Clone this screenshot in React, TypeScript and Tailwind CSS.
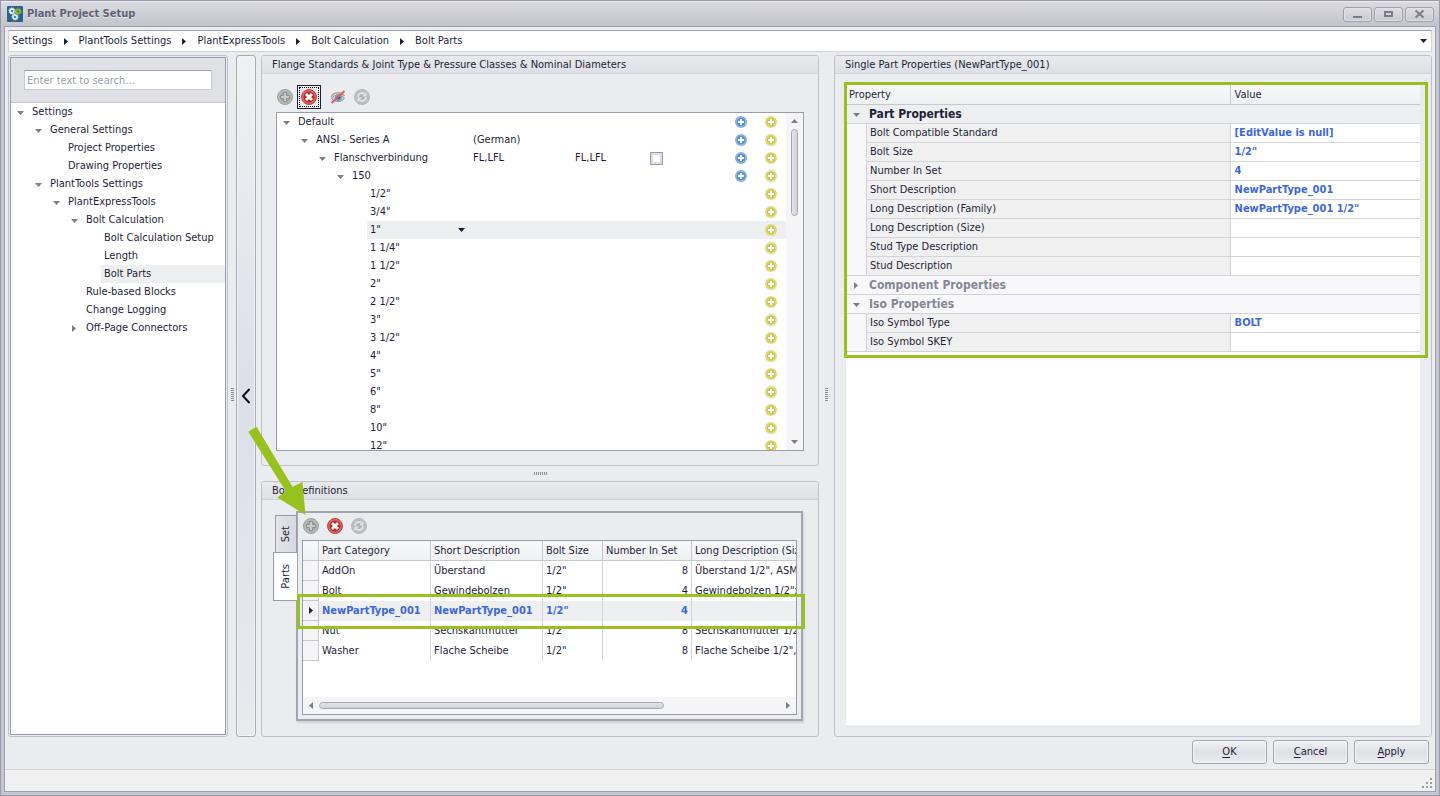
import type { ReactNode } from "react";
import { clsx } from "clsx";

type TreeItem = { label: string; level: number; state?: "open" | "closed"; selected?: boolean };

const navItems: TreeItem[] = [
  { label: "Settings", level: 0, state: "open" },
  { label: "General Settings", level: 1, state: "open" },
  { label: "Project Properties", level: 2 },
  { label: "Drawing Properties", level: 2 },
  { label: "PlantTools Settings", level: 1, state: "open" },
  { label: "PlantExpressTools", level: 2, state: "open" },
  { label: "Bolt Calculation", level: 3, state: "open" },
  { label: "Bolt Calculation Setup", level: 4 },
  { label: "Length", level: 4 },
  { label: "Bolt Parts", level: 4, selected: true },
  { label: "Rule-based Blocks", level: 3 },
  { label: "Change Logging", level: 3 },
  { label: "Off-Page Connectors", level: 3, state: "closed" },
];

type FlangeItem = TreeItem & { first?: string; second?: string; check?: boolean; blue?: boolean };

const flangeItems: FlangeItem[] = [
  { label: "Default", level: 0, state: "open", blue: true },
  { label: "ANSI - Series A", level: 1, state: "open", first: "(German)", blue: true },
  { label: "Flanschverbindung", level: 2, state: "open", first: "FL,LFL", second: "FL,LFL", check: true, blue: true },
  { label: "150", level: 3, state: "open", blue: true },
  ...['1/2"', '3/4"', '1"', '1 1/4"', '1 1/2"', '2"', '2 1/2"', '3"', '3 1/2"', '4"', '5"', '6"', '8"', '10"', '12"'].map(
    (label) => ({ label, level: 4, selected: label === '1"' })
  ),
];

const parts = [
  ["AddOn", "Überstand", '1/2"', "8", 'Überstand 1/2", ASME'],
  ["Bolt", "Gewindebolzen", '1/2"', "4", 'Gewindebolzen 1/2"x65'],
  ["NewPartType_001", "NewPartType_001", '1/2"', "4", ""],
  ["Nut", "Sechskantmutter", '1/2"', "8", 'Sechskantmutter 1/2"'],
  ["Washer", "Flache Scheibe", '1/2"', "8", 'Flache Scheibe 1/2",'],
];

const partProps = [
  ["Bolt Compatible Standard", "[EditValue is null]"],
  ["Bolt Size", '1/2"'],
  ["Number In Set", "4"],
  ["Short Description", "NewPartType_001"],
  ["Long Description (Family)", 'NewPartType_001 1/2"'],
  ["Long Description (Size)", ""],
  ["Stud Type Description", ""],
  ["Stud Description", ""],
];

const isoProps = [
  ["Iso Symbol Type", "BOLT"],
  ["Iso Symbol SKEY", ""],
];

export default function App() {
  return (
    <div className="flex h-screen min-h-[640px] flex-col border border-[#9a99a9] bg-[#c6c6d0] font-['DejaVu_Sans_Condensed','DejaVu_Sans',sans-serif] text-[11px] leading-[18px] text-[#1e1e38] select-none">
      <TitleBar />
      <div className="mx-[3px] mb-[3px] flex min-h-0 flex-1 flex-col border border-[#9fa0ac] bg-[#ebecf0]">
        <Breadcrumb />
        <main className="mx-[3px] flex min-h-0 flex-1">
          <NavPanel />
          <div className="flex w-2 items-center justify-center pb-1">
            <VerticalGrip />
          </div>
          <button
            aria-label="Collapse"
            className="flex w-5 items-center justify-center rounded-[3px] border border-[#a9aab6] bg-linear-to-b from-[#f0f1f3] via-[#dcdfe8] to-[#e9eaee] shadow-[inset_0_0_0_1px_#f3f3f6]"
          >
            <svg width="10" height="16" viewBox="0 0 10 16" fill="none" stroke="#111" strokeWidth="2">
              <path d="M8.500 1L2 8l6.500 7" />
            </svg>
          </button>
          <div className="ml-[5px] flex min-w-0 flex-[559] flex-col">
            <FlangePanel />
            <div className="flex h-[15px] items-center justify-center">
              <HorizontalGrip />
            </div>
            <BoltPanel />
          </div>
          <div className="flex w-[15px] items-center justify-center pb-1">
            <VerticalGrip />
          </div>
          <PropertiesPanel />
        </main>

        {/* dialog buttons */}
        <div className="mt-[3px] mr-[6px] mb-[5px] flex justify-end gap-[6px]">
          <DialogButton accessKey="O" rest="K" />
          <DialogButton accessKey="C" rest="ancel" />
          <DialogButton accessKey="A" rest="pply" />
        </div>

        {/* status bar */}
        <footer className="flex h-[22px] items-end justify-end border-t border-[#d3d4da] bg-[#f0f0f0] pr-[2px] pb-[2px]">
          <svg width="12" height="12" fill="#9b9ba3">
            <path d="M9 1h2v2H9zM5 5h2v2H5zM9 5h2v2H9zM1 9h2v2H1zM5 9h2v2H5zM9 9h2v2H9z" />
          </svg>
        </footer>
      </div>
    </div>
  );
}

function TitleBar() {
  return (
    <header className="flex h-[25px] shrink-0 items-center border-t border-[#ececf0] bg-linear-to-b from-[#dadae0] to-[#c3c3cb] pr-[5px] pl-[6px]">
      <svg width="16" height="16" viewBox="0 0 16 16">
        <rect width="16" height="16" rx="1" fill="#2c6388" />
        <g fill="none" strokeWidth="2">
          <circle cx="5" cy="5" r="2" stroke="#e4eef2" />
          <circle cx="11" cy="5.500" r="2" stroke="#86b82c" />
          <circle cx="8" cy="11" r="2" stroke="#d5e4ec" />
        </g>
        <g fill="none" strokeWidth="1" strokeDasharray="1 1">
          <circle cx="5" cy="5" r="3.300" stroke="#c6dae4" />
          <circle cx="11" cy="5.500" r="3.300" stroke="#6f9f2c" />
          <circle cx="8" cy="11" r="3.300" stroke="#b9d0dd" />
        </g>
      </svg>
      <h1 className="ml-1 flex-1 font-bold text-[#5f5f74] [text-shadow:0_1px_0_#e8e8ee]">Plant Project Setup</h1>
      <div className="flex gap-[2px]">
        <WindowButton label="Minimize">
          <path d="M2 8h9v2H2z" fill="#7c7c8c" />
        </WindowButton>
        <WindowButton label="Maximize">
          <path d="M3 4h7v4H3z" fill="none" stroke="#7c7c8c" strokeWidth="2" />
        </WindowButton>
        <WindowButton label="Close">
          <path d="M2.500 2.500l8 7M10.500 2.500l-8 7" fill="none" stroke="#7c7c8c" strokeWidth="2" />
        </WindowButton>
      </div>
    </header>
  );
}

function WindowButton({ label, children }: { label: string; children: ReactNode }) {
  return (
    <button
      aria-label={label}
      className="flex h-[15px] w-[29px] items-center justify-center rounded-[3px] border border-[#a0a0ac] bg-linear-to-b from-[#dedee3] to-[#c9c9d0] shadow-[inset_0_0_0_1px_#e0e0e6]"
    >
      <svg width="13" height="12" viewBox="0 0 13 12">
        {children}
      </svg>
    </button>
  );
}

function Breadcrumb() {
  const crumbs = ["Settings", "PlantTools Settings", "PlantExpressTools", "Bolt Calculation", "Bolt Parts"];
  return (
    <nav className="m-[3px] flex h-[22px] shrink-0 items-center border border-[#d3d4da] border-t-[#a2a3af] bg-white pl-[3px]">
      {crumbs.map((crumb, i) => (
        <span key={crumb} className="flex items-center">
          {i > 0 && (
            <span className="flex w-[26px] justify-center">
              <Arrow dir="right" dark />
            </span>
          )}
          <a href="#">{crumb}</a>
        </span>
      ))}
      <button aria-label="Show path list" className="ml-auto flex w-[15px] justify-center">
        <Arrow dir="down" dark />
      </button>
    </nav>
  );
}

/* ---------- left navigation ---------- */

function NavPanel() {
  return (
    <aside className="flex w-[220px] shrink-0 rounded-[3px] border border-[#c0c1ca] p-px">
      <div className="flex flex-1 flex-col border border-[#9a9bab] bg-white">
        <div className="flex h-[45px] items-center border-b border-[#c3c4cc] bg-[#e0e1e6] px-[13px]">
          <input
            type="text"
            aria-label="Search settings"
            placeholder="Enter text to search…"
            className="h-5 w-full border border-[#c9cad2] border-t-[#9fa0ad] bg-white px-[2px] outline-none placeholder:text-[#9c9cac]"
          />
        </div>
        <div>
          {navItems.map((item) => (
            <div key={item.label} className="flex h-[18px]" style={{ paddingLeft: item.level * 18 }}>
              <Toggle state={item.state} />
              <span className={clsx("flex-1 pl-[3px]", item.selected && "bg-[#eeeff1]")}>{item.label}</span>
            </div>
          ))}
        </div>
      </div>
    </aside>
  );
}

function Toggle({ state }: { state?: "open" | "closed" }) {
  if (!state) return <span className="w-[18px] shrink-0" />;
  return (
    <button aria-label="Toggle node" className="flex w-[18px] shrink-0 items-center justify-center pt-px">
      <Arrow dir={state === "open" ? "down" : "right"} />
    </button>
  );
}

/* ---------- flange tree ---------- */

function FlangePanel() {
  return (
    <Panel title="Flange Standards & Joint Type & Pressure Classes & Nominal Diameters" className="min-h-0 flex-1">
      <div className="flex min-h-0 flex-1 flex-col px-[14px] pt-[11px] pb-[14px]">
        <div className="flex h-6 items-center">
          <IconButton label="Add">
            <AddIcon />
          </IconButton>
          <button aria-label="Delete" className="flex size-6 items-center justify-center border border-[#1e1e38]">
            <span className="flex size-[18px] items-center justify-center outline-1 outline-dotted outline-black">
              <DeleteIcon />
            </span>
          </button>
          <span className="w-[5px]" />
          <IconButton label="Hide unused">
            <HiddenIcon />
          </IconButton>
          <IconButton label="Refresh">
            <RefreshIcon />
          </IconButton>
        </div>

        <div className="mt-[3px] flex min-h-0 flex-1 border border-[#9a9bab] bg-white">
          <div className="min-w-0 flex-1 overflow-hidden">
            {flangeItems.map((item) => (
              <FlangeRow key={item.label} item={item} />
            ))}
          </div>
          <div className="flex w-[17px] flex-col items-center bg-[#f5f5f7] pt-[6px] pb-[6px]">
            <Arrow dir="up" />
            <div className="mt-[6px] h-[87px] w-[7px] rounded-full border border-[#a5a6b1] bg-linear-to-r from-[#e3e4e8] to-[#d2d3da]" />
            <span className="flex-1" />
            <Arrow dir="down" />
          </div>
        </div>
      </div>
    </Panel>
  );
}

function FlangeRow({ item }: { item: FlangeItem }) {
  return (
    <div className="flex h-[18px]" style={{ paddingLeft: item.level * 18 }}>
      <Toggle state={item.state} />
      <div className={clsx("flex flex-1 items-center justify-end", item.selected && "bg-[#eeeff1]")}>
        <span className="flex flex-1 items-center justify-between pr-2 pl-[3px]">
          {item.label}
          {item.selected && (
            <button aria-label="Choose diameter">
              <Arrow dir="down" dark />
            </button>
          )}
        </span>
        <span className="w-[102px]">{item.first}</span>
        <span className="w-[63px]">{item.second}</span>
        <span className="flex w-9 justify-center">
          {item.check && (
            <input
              type="checkbox"
              aria-label="Use joint type"
              className="size-[13px] appearance-none border border-[#9a9bab] bg-white shadow-[inset_0_0_0_2px_#dddee5]"
            />
          )}
        </span>
        <span className="w-[52px]" />
        <span className="flex w-[30px] justify-center">
          {item.blue && (
            <button aria-label="Add child">
              <PlusBadge color="blue" />
            </button>
          )}
        </span>
        <span className="flex w-[30px] justify-center">
          <button aria-label="Add part">
            <PlusBadge color="yellow" />
          </button>
        </span>
      </div>
    </div>
  );
}

/* ---------- bolt definitions ---------- */

function BoltPanel() {
  return (
    <Panel title="Bolt Definitions" className="relative h-64 shrink-0">
      <div className="flex min-h-0 flex-1 pt-[11px] pr-[15px] pb-[15px] pl-[11px]">
        <div className="z-10 -mr-px flex w-6 flex-col items-end pt-1">
          <button className="flex h-[37px] w-[22px] items-center justify-center border border-b-0 border-[#9a9bab] bg-linear-to-r from-[#e3e4e9] to-[#d8d9e0]">
            <span className="rotate-180 [writing-mode:vertical-rl]">Set</span>
          </button>
          <button className="flex h-[49px] w-6 items-center justify-center border border-r-0 border-[#9a9bab] bg-white">
            <span className="rotate-180 [writing-mode:vertical-rl]">Parts</span>
          </button>
        </div>
        <div className="relative flex min-w-0 flex-1 flex-col border-2 border-[#a3a4b1] px-1 pt-px pb-1 shadow-[1px_2px_2px_#d0d1d8]">
          <div className="flex h-6 items-center">
            <IconButton label="Add part">
              <AddIcon />
            </IconButton>
            <IconButton label="Delete part">
              <DeleteIcon />
            </IconButton>
            <IconButton label="Refresh parts">
              <RefreshIcon />
            </IconButton>
          </div>
          <PartsGrid />
          {/* highlight around the new row */}
          <div className="pointer-events-none absolute top-[81px] -right-1 -left-px h-[35px] border-3 border-[#97c11f]" />
        </div>
      </div>
      <svg className="pointer-events-none absolute -top-[57px] -left-[15px] z-20" width="60" height="92" viewBox="0 0 60 92">
        <path d="M1.300 6.700L9.500 1.700L45.500 61.700L55.500 57L58.500 90L30.300 72.500L39 66.500Z" fill="#97c11f" />
      </svg>
    </Panel>
  );
}

function PartsGrid() {
  return (
    <div className="mt-[2px] flex min-h-0 flex-1 flex-col border border-[#9a9bab] bg-white">
      <div className="flex-1 overflow-hidden">
        <table className="w-full table-fixed border-separate border-spacing-0 text-left whitespace-nowrap">
          <colgroup>
            <col className="w-4" />
            <col className="w-28" />
            <col className="w-28" />
            <col className="w-15" />
            <col className="w-[89px]" />
            <col />
          </colgroup>
          <thead>
            <tr className="h-5 bg-linear-to-b from-[#f8f8fa] to-[#eff0f2]">
              {["", "Part Category", "Short Description", "Bolt Size", "Number In Set", "Long Description (Size)"].map((head) => (
                <th
                  key={head}
                  className="overflow-hidden border-r border-b border-[#c6c7cf] p-0 pl-[3px] font-normal last:border-r-0"
                >
                  {head}
                </th>
              ))}
            </tr>
          </thead>
          <tbody>
            {parts.map((row, i) => {
              const active = i === 2;
              return (
                <tr key={row[0]} className={clsx("h-5", active && "bg-[#eeeff1] font-bold text-[#3d68dc]")}>
                  <td className="border-r border-b border-[#c6c7cf] bg-[#f5f5f7] p-0">
                    {active && (
                      <span className="flex justify-center">
                        <Arrow dir="right" dark />
                      </span>
                    )}
                  </td>
                  {row.map((cell, c) => (
                    <td
                      key={c}
                      className={clsx(
                        "overflow-hidden border-r border-[#d3d4da] py-0 pr-[3px] pl-[3px] last:border-r-0 last:pr-0",
                        c === 3 && "text-right"
                      )}
                    >
                      {cell}
                    </td>
                  ))}
                </tr>
              );
            })}
          </tbody>
        </table>
      </div>
      <div className="flex h-[17px] items-center bg-[#f5f5f7] px-[6px]">
        <Arrow dir="left" />
        <div className="mr-auto ml-[6px] h-[7px] w-[345px] rounded-full border border-[#a5a6b1] bg-linear-to-b from-[#e3e4e8] to-[#d2d3da]" />
        <Arrow dir="right" />
      </div>
    </div>
  );
}

/* ---------- property grid ---------- */

function PropertiesPanel() {
  return (
    <Panel title="Single Part Properties (NewPartType_001)" className="min-w-0 flex-[597]">
      <div className="flex flex-1 p-[11px]">
        <div className="flex-1 bg-white">
          <div className="relative">
            <table className="w-full table-fixed border-separate border-spacing-0 text-left">
              <colgroup>
                <col className="w-[21px]" />
                <col />
                <col className="w-[33%]" />
              </colgroup>
              <thead>
                <tr className="h-5 bg-linear-to-b from-[#f8f8fa] to-[#eff0f2]">
                  <th colSpan={2} className="border-r border-b border-[#c6c7cf] p-0 pl-[3px] font-normal">
                    Property
                  </th>
                  <th className="border-b border-[#c6c7cf] p-0 pl-1 font-normal">Value</th>
                </tr>
              </thead>
              <tbody>
                <CategoryRow title="Part Properties" state="open" active />
                <PropRows rows={partProps} />
                <CategoryRow title="Component Properties" state="closed" />
                <CategoryRow title="Iso Properties" state="open" />
                <PropRows rows={isoProps} />
              </tbody>
            </table>
            <div className="pointer-events-none absolute -top-[3px] -right-2 -bottom-[6px] -left-[2px] border-3 border-[#97c11f]" />
          </div>
        </div>
      </div>
    </Panel>
  );
}

function CategoryRow({ title, state, active }: { title: string; state: "open" | "closed"; active?: boolean }) {
  return (
    <tr className={clsx("h-[19px] text-[12px]", active ? "bg-[#eeeff1] text-[#1e1e38]" : "bg-[#f8f8fb] text-[#868795]")}>
      <td className="border-b border-[#d3d4da] p-0">
        <div className="flex h-[18px] pl-px">
          <Toggle state={state} />
        </div>
      </td>
      <td colSpan={2} className="border-b border-[#d3d4da] p-0 pl-[2px] font-bold">
        {title}
      </td>
    </tr>
  );
}

function PropRows({ rows }: { rows: string[][] }) {
  return rows.map(([name, value], i) => (
    <tr key={name} className="h-[19px]">
      <td className={clsx("border-r border-[#d3d4da] bg-[#f8f8fb] p-0", i === rows.length - 1 && "border-b")} />
      <td className="border-r border-b border-[#d3d4da] bg-[#f0f0f0] p-0 pl-[3px]">{name}</td>
      <td className="border-b border-[#d3d4da] p-0 pl-1 font-bold text-[#3d68dc]">{value}</td>
    </tr>
  ));
}

/* ---------- shared bits ---------- */

function Panel({ title, className, children }: { title: string; className?: string; children: ReactNode }) {
  return (
    <section className={clsx("flex flex-col rounded-[3px] border border-[#c0c1ca]", className)}>
      <h2 className="h-[18px] shrink-0 rounded-t-[2px] border-b border-[#d3d4da] bg-linear-to-b from-[#e9eaed] to-[#dfe0e5] pl-[10px]">
        {title}
      </h2>
      {children}
    </section>
  );
}

function DialogButton({ accessKey, rest }: { accessKey: string; rest: string }) {
  return (
    <button
      accessKey={accessKey}
      className="h-6 w-[75px] rounded-[3px] border border-[#a5a6b3] bg-linear-to-b from-[#f1f2f4] via-[#dee0e6] to-[#ebecef] shadow-[inset_0_0_0_1px_#f4f4f7]"
    >
      <span className="underline underline-offset-2">{accessKey}</span>
      {rest}
    </button>
  );
}

function IconButton({ label, children }: { label: string; children: ReactNode }) {
  return (
    <button aria-label={label} className="flex h-6 w-6 items-center justify-center first:-ml-[3px]">
      {children}
    </button>
  );
}

function Arrow({ dir, dark }: { dir: "up" | "down" | "left" | "right"; dark?: boolean }) {
  const fill = dark ? "#1e1e38" : "#7d7d8a";
  if (dir === "up" || dir === "down")
    return (
      <svg width="7" height="4" className="shrink-0">
        <path d={dir === "down" ? "M0 0h7L3.500 4z" : "M0 4h7L3.500 0z"} fill={fill} />
      </svg>
    );
  return (
    <svg width="4" height="7" className="shrink-0">
      <path d={dir === "right" ? "M0 0v7L4 3.500z" : "M4 0v7L0 3.500z"} fill={fill} />
    </svg>
  );
}

function VerticalGrip() {
  return (
    <svg width="3" height="13">
      <path d="M0 .500h3M0 2.500h3M0 4.500h3M0 6.500h3M0 8.500h3M0 10.500h3M0 12.500h3" stroke="#8b8c99" />
    </svg>
  );
}

function HorizontalGrip() {
  return (
    <svg width="13" height="3">
      <path d="M.5 0v3M2.500 0v3M4.500 0v3M6.500 0v3M8.500 0v3M10.500 0v3M12.500 0v3" stroke="#8b8c99" />
    </svg>
  );
}

function PlusBadge({ color }: { color: "blue" | "yellow" }) {
  const blue = color === "blue";
  return (
    <svg width="12" height="12" viewBox="0 0 12 12">
      <circle cx="6" cy="6" r="6" fill={blue ? "#84b2e2" : "#dcd984"} />
      <circle cx="6" cy="6" r="4" fill={blue ? "#5590cf" : "#cdc84e"} />
      <path d="M5 3h2v2h2v2H7v2H5V7H3V5h2z" fill="#fff" />
    </svg>
  );
}

function AddIcon() {
  return (
    <svg width="16" height="16" viewBox="0 0 16 16">
      <circle cx="8" cy="8" r="7.500" fill="#b8b9b9" stroke="#9c9d9d" />
      <circle cx="8" cy="8" r="5.500" fill="#abacac" />
      <path d="M6.500 3.500h3v3h3v3h-3v3h-3v-3h-3v-3h3z" fill="#cbcccc" stroke="#8c8d8d" strokeWidth="1" />
    </svg>
  );
}

function DeleteIcon() {
  return (
    <svg width="16" height="16" viewBox="0 0 16 16">
      <circle cx="8" cy="8" r="7.500" fill="#dd6461" stroke="#b8484a" />
      <circle cx="8" cy="8" r="5.500" fill="#c92c2c" />
      <path d="M5 5l6 6M11 5l-6 6" stroke="#a02024" strokeWidth="4.500" />
      <path d="M5 5l6 6M11 5l-6 6" stroke="#fff" strokeWidth="3" />
    </svg>
  );
}

function RefreshIcon() {
  return (
    <svg width="16" height="16" viewBox="0 0 16 16">
      <circle cx="8" cy="8" r="7.500" fill="#bfc0c1" stroke="#b4b5b6" />
      <circle cx="8" cy="8" r="5.500" fill="#b0b1b2" />
      <path d="M4 8a4 4 0 0 1 6.500-3.100M12 8a4 4 0 0 1-6.500 3.100" fill="none" stroke="#e2e3e4" strokeWidth="2" />
      <path d="M12.500 3v4.500H8zM3.500 13V8.500H8z" fill="#e2e3e4" />
    </svg>
  );
}

function HiddenIcon() {
  return (
    <svg width="16" height="16" viewBox="0 0 16 16">
      <path d="M1.500 9.500c3-5 10-5 13 0c-3 4-10 4-13 0z" fill="#c9cfd8" stroke="#8f98a8" />
      <path d="M1 8c3-5.500 10-5.500 13.500-1" fill="none" stroke="#c29c7c" strokeWidth="1.500" />
      <circle cx="8.500" cy="8.500" r="3.500" fill="#7e9cc4" />
      <circle cx="8.500" cy="8.500" r="1.800" fill="#3e557a" />
      <path d="M1.500 14L14.500 2" stroke="#cf6562" strokeWidth="2" />
    </svg>
  );
}
